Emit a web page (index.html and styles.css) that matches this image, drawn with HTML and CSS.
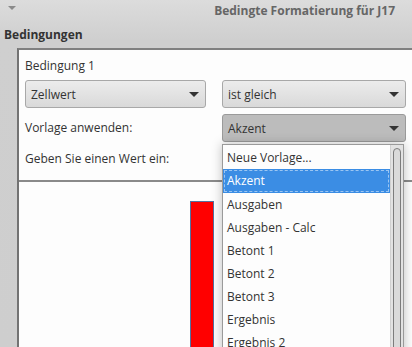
FILE: index.html
```html
<!DOCTYPE html>
<html lang="de">

<head>
    <meta charset="UTF-8">
    <title>Bedingte Formatierung für J17</title>
    <link rel="stylesheet" href="styles.css">
</head>

<body>
    <div class="titlebar">
        <span class="menu-arrow"></span>
        <span class="title">Bedingte Formatierung für J17</span>
    </div>

    <h2 class="section">Bedingungen</h2>

    <div class="frame">
        <div class="cond">
            <div class="label head">Bedingung 1</div>
            <div></div>

            <div class="combo"><span>Zellwert</span><i class="arrow"></i></div>
            <div class="combo"><span>ist gleich</span><i class="arrow"></i></div>

            <div class="label">Vorlage anwenden:</div>
            <div class="combo pressed"><span>Akzent</span><i class="arrow"></i></div>

            <div class="label">Geben Sie einen Wert ein:</div>
            <div></div>
        </div>

        <div class="preview">
            <div class="redbar"></div>
        </div>
    </div>

    <!-- open dropdown list of the "Vorlage anwenden" combo -->
    <div class="popup">
        <ul class="items">
            <li>Neue Vorlage...</li>
            <li class="selected"><span>Akzent</span></li>
            <li>Ausgaben</li>
            <li>Ausgaben - Calc</li>
            <li>Betont 1</li>
            <li>Betont 2</li>
            <li>Betont 3</li>
            <li>Ergebnis</li>
            <li>Ergebnis 2</li>
        </ul>
        <div class="scrollbar">
            <div class="thumb"></div>
        </div>
    </div>
</body>

</html>
```

FILE: styles.css
```css
body {
    margin: 0;
    height: 347px;
    overflow: hidden;
    font-family: "Open Sans", "Noto Sans", sans-serif;
    font-size: 12px;
    color: #333;
    background: linear-gradient(#dcdcdc, #cfcfcf 40px, #cecece);
    position: relative;
}

.titlebar {
    height: 20px;
    display: flex;
    align-items: center;
    justify-content: space-between;
    padding: 0 17px 0 8px;
}

.menu-arrow {
    width: 0;
    height: 0;
    border-left: 4px solid transparent;
    border-right: 4px solid transparent;
    border-top: 4px solid #8a8a8a;
    margin-top: -5px;
}

.title {
    font-weight: bold;
    color: #666;
    font-size: 12px;
}

.section {
    margin: 3px 0 0 4px;
    font-size: 12px;
    font-weight: bold;
    color: #333;
    height: 25px;
    line-height: 23px;
}

.frame {
    margin-left: 17px;
    border-left: 2px solid #737373;
    border-top: 2px solid #808080;
    background: #fdfdfd;
    height: 300px;
}

.cond {
    display: grid;
    grid-template-columns: 181px 184px;
    column-gap: 16px;
    row-gap: 6px;
    padding: 5px 0 10px 6px;
    border-bottom: 2px solid #8a8a8a;
    align-items: center;
}

.label {
    height: 22px;
    line-height: 22px;
}

.label.head {
    margin-bottom: -3px;
}

.combo {
    height: 28px;
    box-sizing: border-box;
    border: 1px solid #a8a8a8;
    border-radius: 3px;
    background: linear-gradient(#ececec, #d9d9d9);
    display: flex;
    align-items: center;
    justify-content: space-between;
    padding: 0 6px 0 5px;
}

.combo.pressed {
    background: #bcbcbc;
    border-color: #9a9a9a;
}

.arrow {
    width: 0;
    height: 0;
    border-left: 5px solid transparent;
    border-right: 5px solid transparent;
    border-top: 5px solid #333;
}

.preview {
    padding: 19px 0 0 171px;
}

.redbar {
    width: 22px;
    height: 160px;
    background: #ff0000;
    border: 1px solid #5472a0;
}

.popup {
    position: absolute;
    left: 222px;
    top: 144px;
    width: 182px;
    height: 220px;
    background: #fdfdfd;
    border: 1px solid #9a9a9a;
    box-sizing: border-box;
    box-shadow: 0 0 10px rgba(0, 0, 0, 0.25);
    display: flex;
}

.items {
    list-style: none;
    margin: 0;
    padding: 1px 0 0 0;
    flex: 1;
}

.items li {
    height: 23px;
    line-height: 23px;
    padding-left: 4px;
}

.items li.selected {
    background: #3b8de4;
    color: #fff;
    padding: 1px 1px 0 1px;
}

.items li.selected span {
    display: block;
    height: 20px;
    line-height: 20px;
    padding-left: 2px;
    border: 1px dashed #9cc6f2;
}

.scrollbar {
    width: 13px;
    background: #e2e2e2;
    border-left: 1px solid #d0d0d0;
    padding: 3px 2px 0 2px;
    box-sizing: border-box;
}

.thumb {
    height: 300px;
    background: #dadada;
    border: 1px solid #7c7c7c;
    border-radius: 4px 4px 0 0;
    box-sizing: border-box;
}
```
